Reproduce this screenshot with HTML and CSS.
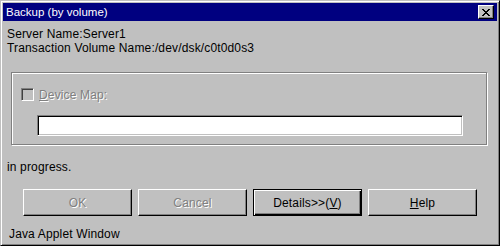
FILE: index.html
```html
<!DOCTYPE html>
<html>
<head>
<meta charset="utf-8">
<link rel="stylesheet" href="styles.css">
</head>
<body>
<div class="window">
  <div class="titlebar">
    <span class="title">Backup (by volume)</span>
    <button class="close" aria-label="Close">
      <svg width="8" height="7" viewBox="0 0 8 7"><path d="M0 0h2v1h1v1h2v-1h1v-1h2v1h-1v1h-1v1h-1v1h1v1h1v1h1v1h-2v-1h-1v-1h-2v1h-1v1h-2v-1h1v-1h1v-1h1v-1h-1v-1h-1v-1h-1z" fill="#000"/></svg>
    </button>
  </div>
  <div class="body">
    <div class="info">
      <div class="line">Server Name:Server1</div>
      <div class="line">Transaction Volume Name:/dev/dsk/c0t0d0s3</div>
    </div>
    <div class="group">
      <label class="check">
        <span class="box"></span>
        <span class="disabled-text"><u>D</u>evice Map:</span>
      </label>
      <div class="field"></div>
    </div>
    <div class="status">in progress.</div>
    <div class="buttons">
      <div class="btn disabled"><span class="disabled-text">OK</span></div>
      <div class="btn disabled"><span class="disabled-text">Cancel</span></div>
      <div class="btn default"><span>Details&gt;&gt;(<u>V</u>)</span></div>
      <div class="btn"><span><u>H</u>elp</span></div>
    </div>
    <div class="applet">Java Applet Window</div>
  </div>
</div>
</body>
</html>
```
FILE: styles.css
```css
html, body {
  margin: 0;
  padding: 0;
  background: #c0c0c0;
}
.window {
  box-sizing: border-box;
  width: 500px;
  height: 246px;
  background: #c0c0c0;
  border: 1px solid;
  border-color: #c0c0c0 #000 #000 #c0c0c0;
  box-shadow: inset 1px 1px #fff, inset -1px -1px #808080;
  padding: 2px;
  font-family: "Liberation Sans", Arial, sans-serif;
  font-size: 12px;
  letter-spacing: 0.15px;
  color: #000;
  display: flex;
  flex-direction: column;
}
.titlebar {
  height: 18px;
  background: #000080;
  color: #fff;
  display: flex;
  align-items: center;
  justify-content: space-between;
  padding: 0 3px 0 3px;
}
.title {
  font-size: 11.5px;
  letter-spacing: 0;
  line-height: 18px;
}
.close {
  box-sizing: border-box;
  width: 16px;
  height: 14px;
  padding: 0;
  margin: 0;
  background: #c0c0c0;
  border: 1px solid;
  border-color: #fff #000 #000 #fff;
  box-shadow: inset -1px -1px #808080;
  display: flex;
  align-items: center;
  justify-content: center;
}
.close svg { display: block; }
.body {
  flex: 1;
  display: flex;
  flex-direction: column;
  padding: 6px 0 0 4px;
}
.line {
  line-height: 14px;
}
.group {
  box-sizing: border-box;
  margin: 17px 10px 0 4px;
  height: 73px;
  border: 1px solid #808080;
  box-shadow: inset 1px 1px #fff, 1px 1px #fff;
  padding: 15px 0 0 9px;
}
.check {
  display: flex;
  align-items: center;
  gap: 5px;
  height: 13px;
}
.box {
  box-sizing: border-box;
  width: 13px;
  height: 13px;
  border: 1px solid;
  border-color: #808080 #fff #fff #808080;
  box-shadow: inset 1px 1px #404040, inset -1px -1px #c0c0c0;
  background: #c0c0c0;
}
.disabled-text {
  color: #808080;
  text-shadow: 1px 1px 0 #fff;
}
.field {
  box-sizing: border-box;
  margin: 14px 0 0 16px;
  width: 426px;
  height: 21px;
  background: #fff;
  border: 1px solid;
  border-color: #808080 #fff #fff #808080;
  box-shadow: inset 1px 1px #000, inset -1px -1px #c0c0c0;
}
.status {
  margin-top: 15px;
  line-height: 14px;
}
.buttons {
  display: flex;
  gap: 6px;
  margin: 15px 0 0 16px;
}
.btn {
  box-sizing: border-box;
  width: 109px;
  height: 27px;
  border: 1px solid;
  border-color: #fff #000 #000 #fff;
  box-shadow: inset -1px -1px #808080;
  display: flex;
  align-items: center;
  justify-content: center;
  line-height: 14px;
}
.btn.default {
  border: 1px solid #000;
  box-shadow: inset 1px 1px #fff, inset -1px -1px #000, inset -2px -2px #808080;
}
.applet {
  margin-top: 11px;
  padding-left: 2px;
  line-height: 14px;
}
```
